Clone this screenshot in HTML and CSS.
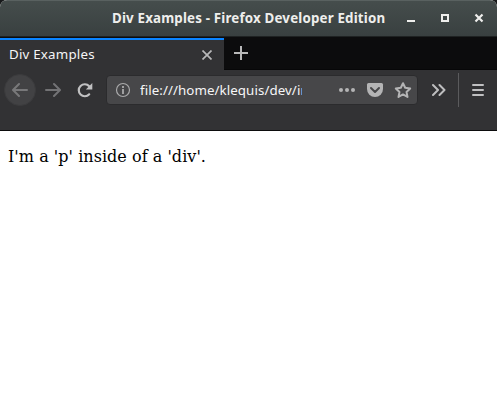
FILE: index.html
```html
<!DOCTYPE html>
<html lang="en">
<head>
<meta charset="utf-8">
<title>Div Examples</title>
<link rel="stylesheet" href="styles.css">
</head>
<body>
<div class="window">
  <header class="titlebar">
    <h1 class="title"><span>Div Examples - Firefox Developer Edition</span></h1>
    <svg class="controls" width="112" height="35" viewBox="385 0 112 35" fill="none" stroke="#eeeeec">
      <path d="M407 21h8" stroke-width="2"/>
      <path d="M442 15h6v6h-6z" stroke-width="2"/>
      <path d="M475.5 14.5l7 7m0-7l-7 7" stroke-width="2.2"/>
    </svg>
  </header>
  <div class="tabs">
    <div class="tab">
      <span class="tab-label">Div Examples</span>
      <svg width="10" height="10" viewBox="0 0 10 10" fill="none" stroke="#b8b8b9" stroke-width="1.7"><path d="M.5.5l9 9m0-9l-9 9"/></svg>
    </div>
    <svg class="new-tab" width="14" height="14" viewBox="0 0 14 14" fill="none" stroke="#b9b9b9" stroke-width="2"><path d="M7 0v14M0 7h14"/></svg>
  </div>
  <div class="toolbar">
    <div class="back">
      <svg width="16" height="16" viewBox="0 0 16 16" fill="none" stroke="#78787a" stroke-width="2" stroke-linecap="round" stroke-linejoin="round"><path d="M15 8H1.5M7 2L1 8l6 6"/></svg>
    </div>
    <svg class="forward" width="16" height="16" viewBox="0 0 16 16" fill="none" stroke="#737375" stroke-width="2" stroke-linecap="round" stroke-linejoin="round"><path d="M1 8h13.5M9 2l6 6-6 6"/></svg>
    <svg class="reload" width="16" height="16" viewBox="0 0 16 16"><path d="M12.2 12.3A6 6 0 1 1 12.2 4.2" fill="none" stroke="#c0c0c1" stroke-width="2.2" stroke-linecap="round"/><path d="M15.3 1v6.5H8.8z" fill="#c0c0c1"/></svg>
    <div class="urlbar">
      <svg class="info" width="16" height="16" viewBox="0 0 16 16" fill="none" stroke="#aaaaab"><circle cx="8" cy="8" r="6.5" stroke-width="1.2"/><path d="M8 7v5M8 4v2" stroke-width="1.8"/></svg>
      <div class="url"><span>file:///home/klequis/dev/in</span></div>
      <svg class="actions" width="78" height="18" viewBox="337 81 78 18">
        <g fill="#b4b4b5"><circle cx="341" cy="90" r="2"/><circle cx="347" cy="90" r="2"/><circle cx="353" cy="90" r="2"/>
        <path d="M368.5 83h13q1.5 0 1.5 1.5V89a8 8 0 0 1-16 0v-4.500q0-1.500 1.500-1.500z"/></g>
        <path d="M371 88l4 4 4-4" fill="none" stroke="#474749" stroke-width="2" stroke-linecap="round" stroke-linejoin="round"/>
        <path d="M403 83.200l2.200 4.600 5 .6-3.700 3.500 1 5-4.500-2.500-4.500 2.500 1-5-3.700-3.500 5-.6z" fill="none" stroke="#b4b4b5" stroke-width="2" stroke-linejoin="round"/>
      </svg>
    </div>
    <svg class="overflow" width="14" height="14" viewBox="0 0 14 14" fill="none" stroke="#bebebf" stroke-width="2" stroke-linecap="round" stroke-linejoin="round"><path d="M1 2l5 5-5 5M7.500 2l5 5-5 5"/></svg>
    <div class="divider"></div>
    <svg class="menu" width="12" height="12" viewBox="0 0 12 12" fill="none" stroke="#c0c0c1" stroke-width="2" stroke-linecap="round"><path d="M1 1h10M1 6h10M1 11h10"/></svg>
  </div>
  <main class="page"><div><p>I'm a 'p' inside of a 'div'.</p></div></main>
</div>
</body>
</html>
```
FILE: styles.css
```css
* { box-sizing: border-box; }
body { margin: 0; background: #17191a; overflow: hidden; }
svg { display: block; flex: none; }
.window { width: 497px; height: 408px; overflow: hidden; border-radius: 7px 7px 0 0; background: #fff; font-family: "Noto Sans", sans-serif; }
.titlebar { height: 37px; display: flex; align-items: flex-start; justify-content: flex-end; background: linear-gradient(#454d4c, #394040 35px, #222626 35px, #151616 37px); border-top: 1px solid #596160; }
.title { margin: 0; width: 273px; font-size: 13.333px; line-height: 34px; font-weight: 700; letter-spacing: 0.175px; color: #eeeeec; white-space: nowrap; }
.controls { margin-top: -1px; }
.tabs { height: 33px; padding-top: 1px; display: flex; align-items: flex-start; background: #0c0c0d; border-bottom: 1px solid #070708; }
.tab { width: 224px; height: 32px; margin-bottom: -1px; padding: 0 12px 0 9px; display: flex; align-items: center; justify-content: space-between; background: #323234; border-top: 2px solid #0a84ff; }
.tab-label { font-size: 13.333px; line-height: 28px; letter-spacing: 0.2px; padding-bottom: 2px; color: #f5f5f6; white-space: nowrap; }
.new-tab { margin: 8px 0 0 10px; }
.toolbar { height: 61px; padding: 0 0 20px 4px; display: flex; align-items: center; background: #323234; border-bottom: 1px solid #0c0c0d; }
.back { width: 32px; height: 32px; display: grid; place-items: center; border-radius: 50%; background: #424244; border: 1px solid #3b3b3d; }
.forward { margin-left: 9px; }
.reload { margin-left: 16px; }
.urlbar { width: 312px; height: 30px; margin-left: 13px; padding: 0 2px 0 8px; display: flex; align-items: center; background: #474749; border: 1px solid #2b2b2d; border-radius: 4px; }
.url { width: 164px; margin-left: 9px; overflow: hidden; font-size: 13.333px; line-height: 28px; letter-spacing: 0.07px; color: #f6f6f7; white-space: nowrap; }
.actions { margin-left: 35px; }
.overflow { margin-left: 14px; }
.divider { width: 1px; height: 34px; margin-left: 12px; background: #5b5b5d; }
.menu { margin-left: 13px; }
.page { height: 277px; padding: 0 8px; background: #fff; color: #000; font: 16px/19px "DejaVu Serif", serif; letter-spacing: 0.04px; }
.page p { margin: 0; padding-top: 16px; }
```
